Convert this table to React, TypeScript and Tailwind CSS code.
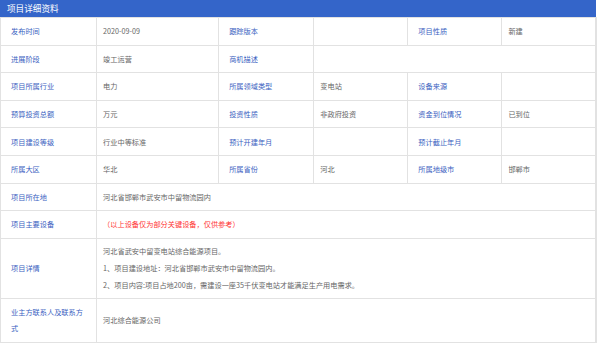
import React from "react";

type Cell = { label: string; value?: string; span?: number };

const rows: Cell[][] = [
  [
    { label: "发布时间", value: "2020-09-09" },
    { label: "跟踪版本", value: "" },
    { label: "项目性质", value: "新建" },
  ],
  [
    { label: "进展阶段", value: "竣工运营" },
    { label: "商机描述", value: "", span: 3 },
  ],
  [
    { label: "项目所属行业", value: "电力" },
    { label: "所属领域类型", value: "变电站" },
    { label: "设备来源", value: "" },
  ],
  [
    { label: "预算投资总额", value: "万元" },
    { label: "投资性质", value: "非政府投资" },
    { label: "资金到位情况", value: "已到位" },
  ],
  [
    { label: "项目建设等级", value: "行业中等标准" },
    { label: "预计开建年月", value: "" },
    { label: "预计截止年月", value: "" },
  ],
  [
    { label: "所属大区", value: "华北" },
    { label: "所属省份", value: "河北" },
    { label: "所属地级市", value: "邯郸市" },
  ],
  [{ label: "项目所在地", value: "河北省邯郸市武安市中留物流园内", span: 5 }],
];

const labelCls =
  "border border-[#e2e2e2] pl-[10px] pr-[8px] text-[#3b5fbf] align-middle";
const valueCls = "border border-[#e2e2e2] pl-[6px] pr-[6px] text-[#666] align-middle";

const App: React.FC = () => {
  return (
    <div
      className="w-[600px] h-[344px] bg-white overflow-hidden"
      style={{ fontFamily: '"Noto Sans CJK SC", "Noto Sans", sans-serif' }}
    >
      <div className="w-[597px]">
        <div className="h-[17px] w-[596px] bg-[#3465c9] text-white text-[8.6px] leading-[17px] pl-[7px]">
          项目详细资料
        </div>
        <table className="w-[597px] table-fixed border-collapse border-r-2 border-r-[#e2e2e2] text-[7.2px] leading-[16px]">
          <colgroup>
            <col className="w-[96px]" />
            <col className="w-[122px]" />
            <col className="w-[95px]" />
            <col className="w-[94px]" />
            <col className="w-[94px]" />
            <col className="w-[94px]" />
          </colgroup>
          <tbody>
            {rows.map((row, i) => (
              <tr key={i} className="h-[27.6px]">
                {row.map((c) => (
                  <React.Fragment key={c.label}>
                    <td className={labelCls}>{c.label}</td>
                    <td className={valueCls} colSpan={c.span || 1}>
                      {c.value}
                    </td>
                  </React.Fragment>
                ))}
              </tr>
            ))}
            <tr className="h-[27.6px]">
              <td className={labelCls}>项目主要设备</td>
              <td className={valueCls + " !text-[#f33]"} colSpan={5}>
                （以上设备仅为部分关键设备，仅供参考）
              </td>
            </tr>
            <tr className="h-[60px]">
              <td className={labelCls}>项目详情</td>
              <td className={valueCls + " leading-[17px]"} colSpan={5}>
                <p>河北省武安中留变电站综合能源项目。</p>
                <p>1、项目建设地址：河北省邯郸市武安市中留物流园内。</p>
                <p>2、项目内容:项目占地200亩，需建设一座35千伏变电站才能满足生产用电需求。</p>
              </td>
            </tr>
            <tr className="h-[44px]">
              <td className={labelCls}>业主方联系人及联系方式</td>
              <td className={valueCls} colSpan={5}>
                河北综合能源公司
              </td>
            </tr>
          </tbody>
        </table>
      </div>
    </div>
  );
};

export default App;
